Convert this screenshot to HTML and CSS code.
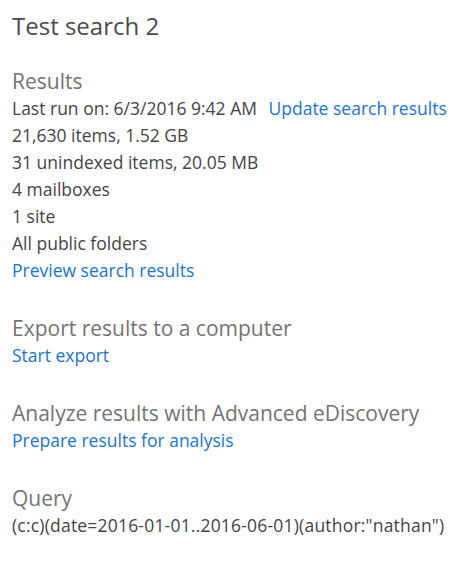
FILE: index.html
```html
<!DOCTYPE html>
<html>
<head>
<meta charset="utf-8">
<link rel="stylesheet" href="styles.css">
</head>
<body>
<div class="panel">
  <h1 class="title">Test search 2</h1>
  <section class="section first">
    <h2 class="heading">Results</h2>
    <div class="line">Last run on: 6/3/2016 9:42 AM <a class="link update">Update search results</a></div>
    <div class="line">21,630 items, 1.52 GB</div>
    <div class="line">31 unindexed items, 20.05 MB</div>
    <div class="line">4 mailboxes</div>
    <div class="line">1 site</div>
    <div class="line">All public folders</div>
    <div class="line"><a class="link">Preview search results</a></div>
  </section>
  <section class="section">
    <h2 class="heading">Export results to a computer</h2>
    <div class="line"><a class="link">Start export</a></div>
  </section>
  <section class="section">
    <h2 class="heading">Analyze results with Advanced eDiscovery</h2>
    <div class="line"><a class="link">Prepare results for analysis</a></div>
  </section>
  <section class="section">
    <h2 class="heading">Query</h2>
    <div class="line query">(c:c)(date=2016-01-01..2016-06-01)(author:"nathan")</div>
  </section>
</div>
</body>
</html>
```
FILE: styles.css
```css
html, body {
  margin: 0;
  padding: 0;
  background: #ffffff;
}
.panel {
  font-family: "Open Sans", sans-serif;
  color: #444444;
  padding: 8px 12px 0 12px;
}
.title {
  margin: 0;
  font-weight: 400;
  font-size: 24px;
  line-height: 36px;
  color: #4a4a4a;
}
.section {
  margin-top: 31px;
}
.section.first {
  margin-top: 24px;
}
.heading {
  margin: 0;
  font-weight: 400;
  font-size: 21px;
  line-height: 27px;
  color: #737373;
}
.line {
  font-size: 17.5px;
  line-height: 27px;
  white-space: nowrap;
}
.link {
  color: #1a74cc;
  text-decoration: none;
}
.update {
  margin-left: 7px;
}
.query {
  font-size: 17.5px;
  letter-spacing: 0.2px;
}
```
